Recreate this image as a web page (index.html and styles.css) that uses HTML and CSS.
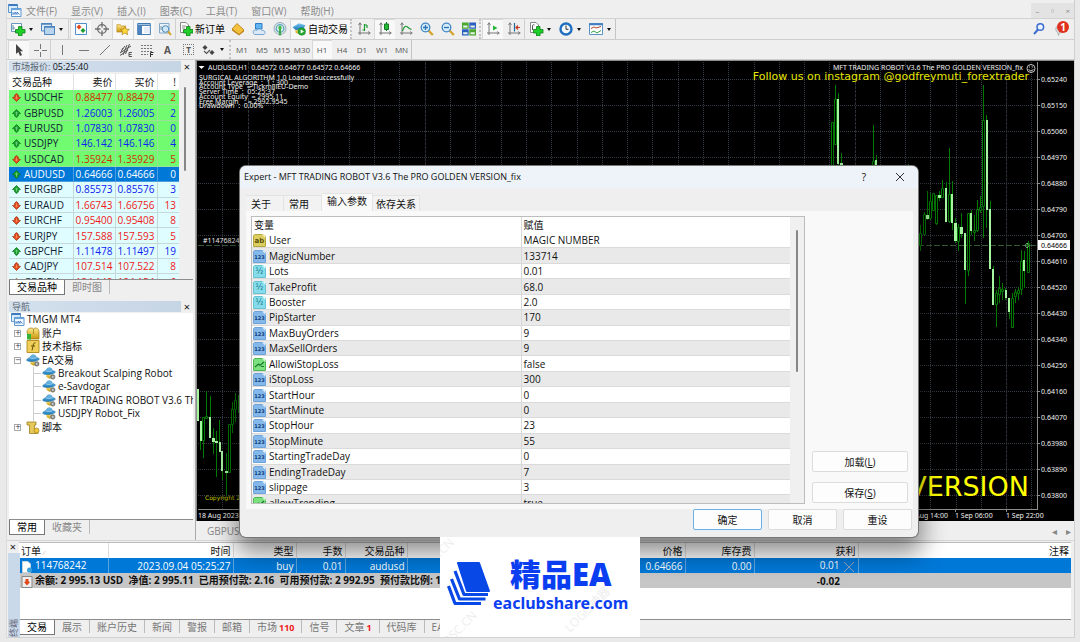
FILE: index.html
```html
<!DOCTYPE html>
<html lang="zh-CN">
<head>
<meta charset="utf-8">
<title>TMGM MT4</title>
<link rel="stylesheet" href="styles.css">
</head>
<body>
<svg class="defs" aria-hidden="true">
  <defs>
    <linearGradient id="gold" x1="0" y1="0" x2="0" y2="1"><stop offset="0" stop-color="#ffe98a"/><stop offset="1" stop-color="#c8960c"/></linearGradient>
    <linearGradient id="sky" x1="0" y1="0" x2="0" y2="1"><stop offset="0" stop-color="#7cc6f2"/><stop offset="1" stop-color="#1b78b8"/></linearGradient>
    <symbol id="up" viewBox="0 0 9 9"><path d="M4.5 .5L8.5 4.5L6.3 5V7L4.5 8.5L2.7 7V5L.5 4.5Z" fill="#19a02c" stroke="#0b6e1c" stroke-width=".7"/><path d="M4.5 2.5L6 4.3H5V6.5H4V4.3H3Z" fill="#6fd07c"/></symbol>
    <symbol id="down" viewBox="0 0 9 9"><path d="M4.5 8.5L8.5 4.5L6.3 4V2L4.5 .5L2.7 2V4L.5 4.5Z" fill="#e2481c" stroke="#9c3312" stroke-width=".7"/><path d="M4.5 6.5L6 4.7H5V2.5H4V4.7H3Z" fill="#f88a5c"/></symbol>
    <symbol id="int" viewBox="0 0 13 13"><path d="M1.5 .5H9L12.5 2V12.5H.5V1.5Z" fill="#84b8ea" stroke="#6da3d8"/><path d="M9 .5L12.5 4V.5Z" fill="#d9ebfb"/><text x="6.5" y="9.4" class="glyph" fill="#123c78">123</text></symbol>
    <symbol id="dbl" viewBox="0 0 13 13"><path d="M1.5 .5H9L12.5 2V12.5H.5V1.5Z" fill="#85dcea" stroke="#66c2d2"/><path d="M9 .5L12.5 4V.5Z" fill="#dcf8fb"/><text x="6.3" y="9" class="glyph half" fill="#137486">½</text></symbol>
    <symbol id="str" viewBox="0 0 13 13"><path d="M1.5 .5H9L12.5 2V12.5H.5V1.5Z" fill="#dccf62" stroke="#b5a63c"/><path d="M9 .5L12.5 4V.5Z" fill="#f7f2c2"/><text x="6.3" y="9" class="glyph ab" fill="#5c4f08">ab</text></symbol>
    <symbol id="bool" viewBox="0 0 13 13"><path d="M1.5 .5H9L12.5 2V12.5H.5V1.5Z" fill="#7de07f" stroke="#4fb656"/><path d="M9 .5L12.5 4V.5Z" fill="#d8f8d8"/><path d="M2 9L5.5 6L7 7.500L11 4M8 8.500H11" fill="none" stroke="#14792a" stroke-width="1.200"/></symbol>
    <symbol id="robot" viewBox="0 0 14 13"><path d="M4 6L4.5 10L8 12L10.5 8Z" fill="url(#gold)"/><path d="M.5 6.3C1 4.5 3 4 4 3.5C4.5 1 7 .3 8.500 1C10 1.500 10.300 3 10.500 3.500C12.500 3.700 13.500 4.500 13.200 5.500C11 7.500 3 8.500 .5 6.3Z" fill="url(#sky)" stroke="#2377a8" stroke-width=".5"/><path d="M4 3.800C6 4.800 8.500 4.500 10.500 3.500" fill="none" stroke="#c2e7fb" stroke-width=".7"/><circle cx="10.800" cy="9.900" r="2.300" fill="#8d8d88" stroke="#666" stroke-width=".5"/><circle cx="10.800" cy="9.900" r=".8" fill="#ddd"/></symbol>
    <symbol id="app" viewBox="0 0 14 13"><path d="M.5 .5H9.500V8.500H.5Z" fill="#d8ebfa" stroke="#5f97cf"/><path d="M.5 1H9.500" stroke="#3e7ac0" stroke-width="2"/><path d="M3.500 4.500H13V12.500H3.500Z" fill="#f5faff" stroke="#5f97cf"/><path d="M3.500 5.300H13" stroke="#6aa4dc" stroke-width="1.600"/><path d="M5 11V8.500L7 10.500V8L9 10.500V8L11.500 10.500" fill="none" stroke="#3a78c4" stroke-width=".9"/></symbol>
    <symbol id="plus" viewBox="0 0 10 10"><path d="M3.300 .5H6.700V3.300H9.500V6.700H6.700V9.500H3.300V6.700H.5V3.300H3.300Z" fill="#1fcf2a" stroke="#0b7d17"/></symbol>
    <symbol id="axes" viewBox="0 0 14 14"><path d="M3 1V13M1 11H13" stroke="#777" fill="none"/><path d="M1.500 3L3 .7L4.500 3M11 9.500L13.300 11L11 12.500" fill="none" stroke="#777" stroke-width=".9"/></symbol>
  </defs>
</svg>

<div class="app">
  <nav class="menubar">
    <svg class="i13"><use href="#app"/></svg>
    <button>文件(F)</button><button>显示(V)</button><button>插入(I)</button><button>图表(C)</button><button>工具(T)</button><button>窗口(W)</button><button>帮助(H)</button>
    <div class="winctl"><button aria-label="最小化">–</button><button aria-label="还原">▫</button><button aria-label="关闭">×</button></div>
  </nav>

  <div class="toolbar">
    <button class="tb drop" aria-label="新图表"><svg viewBox="0 0 16 14"><path d="M1.500 1.500H11.500V9.500H1.500Z" fill="#fff" stroke="#6b97bd"/><path d="M3 3V8M3 6H5" stroke="#5b8aa8" fill="none"/><path d="M8.500 4.500H12V7.500H15V11H12V14H8.500V11H5.500V7.500H8.500Z" fill="#1fcf2a" stroke="#0b7d17" stroke-width=".8"/></svg><i></i></button>
    <button class="tb drop" aria-label="配置"><svg viewBox="0 0 16 14"><path d="M1.500 1.500H11.500V9H1.500Z" fill="#dcebf8" stroke="#4c84bd"/><path d="M4.500 4.500H14.500V12.500H4.500Z" fill="#b9d5ee" stroke="#4c84bd"/><path d="M1 2H12M4 5H15" stroke="#4c84bd" stroke-width="1.500"/></svg><i></i></button>
    <span class="sep"></span>
    <button class="tb on" aria-label="市场报价"><svg viewBox="0 0 14 14"><path d="M1.500 1.500H12.500V12.500H1.500Z" fill="#fff" stroke="#4f8fcc"/><path d="M5 2.500L7.500 5L5 7.500L2.500 5Z" fill="#e2481c"/><path d="M9 6L11.500 8.500L9 11L6.500 8.500Z" fill="#19a02c"/></svg></button>
    <button class="tb" aria-label="数据窗口"><svg viewBox="0 0 14 14" fill="none" stroke="#6d6d6d"><circle cx="7" cy="7" r="4.300" stroke-width="1.300"/><path d="M7 0V5.500M7 8.500V14M0 7H5.500M8.500 7H14" stroke-width="1.300"/></svg></button>
    <button class="tb on" aria-label="导航"><svg viewBox="0 0 16 14"><path d="M1 2H5L6 3.500H11V10.500H1Z" fill="url(#gold)" stroke="#b68b1c" stroke-width=".7"/><path d="M10 4L11.600 7.200L15.200 7.500L12.500 9.900L13.300 13.500L10 11.600L6.800 13.500L7.600 9.900L4.900 7.500L8.500 7.200Z" fill="#ffd83a" stroke="#ad7e12" stroke-width=".8"/></svg></button>
    <button class="tb on" aria-label="终端"><svg viewBox="0 0 14 14"><path d="M.7 1.500H13.300V12.500H.7Z" fill="#fff" stroke="#3f7ab5"/><path d="M1 2.500H13V4H5V12H1Z" fill="#4a83bd"/><path d="M7 6H12M7 8H12M7 10H12" stroke="#cadcf2"/></svg></button>
    <button class="tb" aria-label="策略测试"><svg viewBox="0 0 14 14"><path d="M1.500 1.500H11V11H1.500Z" fill="#e9f3fb" stroke="#83a8c8"/><path d="M3 8V4M5 9V5" stroke="#79a"/><circle cx="7.500" cy="7" r="3.300" fill="#cfe8f8" stroke="#5388b5"/><path d="M10 9.500L13 12.800" stroke="#d7a32a" stroke-width="2"/></svg></button>
    <span class="sep"></span>
    <button class="tb neworder"><svg viewBox="0 0 14 14"><path d="M1.500 .5H7L9.500 3V10.500H1.500Z" fill="#fff" stroke="#888"/><path d="M3 4H7M3 6H6" stroke="#888"/><path d="M7.500 4.500H11V7.500H14V11H11V14H7.500V11H4.500V7.500H7.500Z" fill="#1fcf2a" stroke="#0b7d17" stroke-width=".8"/></svg>新订单</button>
    <button class="tb" aria-label="MetaEditor"><svg viewBox="0 0 14 14"><path d="M1 7L6 1.500L13 8L8 12.500Z" fill="#f5c13c" stroke="#ae7b12" stroke-width=".8"/><path d="M1 7L8 12.500L13 8V9.500L8 13.500L1 8.500Z" fill="#bd8112"/></svg></button>
    <button class="tb" aria-label="MQL5"><svg viewBox="0 0 14 14"><path d="M3.500 1.500H10V7H3.500Z" fill="#62b5f0" stroke="#2b7fc6"/><path d="M1.500 11.500C0 8 3.500 7.500 4.500 8.500C6 6.500 9.500 6.500 10 8.500C13 8 14 11 12 12.500H2.500Z" fill="#dbe9f6" stroke="#5b93c6" stroke-width=".8"/></svg></button>
    <button class="tb" aria-label="信号"><svg viewBox="0 0 14 14" fill="none"><circle cx="7" cy="6.500" r="6" fill="#d9e6e6" stroke="#9ab"/><circle cx="7" cy="6.500" r="3.800" stroke="#56a7c0" stroke-width="1.200"/><path d="M7 6V13.500" stroke="#2ba52f" stroke-width="1.700"/><circle cx="7" cy="5.500" r="1.700" fill="#42bd45"/></svg></button>
    <button class="tb auto on"><svg viewBox="0 0 15 14"><path d="M3 6L4 11L9 13L12 7Z" fill="url(#gold)"/><path d="M.5 5L7.500 .8L14.300 3L12 7.500L4 8.200Z" fill="url(#sky)"/><circle cx="10.500" cy="9.700" r="4" fill="#25a832" stroke="#0c7a1a" stroke-width=".5"/><path d="M9.300 7.500L12.800 9.700L9.300 11.900Z" fill="#fff"/></svg>自动交易</button>
    <span class="sep wide"></span>
    <button class="tb" aria-label="柱状图"><svg viewBox="0 0 14 14"><use href="#axes"/><path d="M7.500 2V9M7.500 3H10M5.500 8H7.500M10 3V6" stroke="#1d9a30" fill="none" stroke-width="1.200"/></svg></button>
    <button class="tb on" aria-label="蜡烛图"><svg viewBox="0 0 14 14"><use href="#axes"/><path d="M8.500 0V9" stroke="#117a22"/><path d="M6.500 2H10.500V7.500H6.500Z" fill="#24bb36" stroke="#117a22"/></svg></button>
    <button class="tb" aria-label="折线图"><svg viewBox="0 0 14 14"><use href="#axes"/><path d="M3.500 9C5 4 7 3.500 8.500 5S11 7 12.500 7.500" stroke="#1d9a30" fill="none" stroke-width="1.200"/></svg></button>
    <button class="tb" aria-label="放大"><svg viewBox="0 0 14 14"><path d="M8.500 8.500L12.800 13" stroke="#d4a52c" stroke-width="2.400"/><circle cx="5.500" cy="5.500" r="4.300" fill="#d4ecfb" stroke="#3f86c4" stroke-width="1.300"/><path d="M3 5.500H8M5.500 3V8" stroke="#2b72b4" stroke-width="1.300"/></svg></button>
    <button class="tb" aria-label="缩小"><svg viewBox="0 0 14 14"><path d="M8.500 8.500L12.800 13" stroke="#d4a52c" stroke-width="2.400"/><circle cx="5.500" cy="5.500" r="4.300" fill="#d4ecfb" stroke="#3f86c4" stroke-width="1.300"/><path d="M3 5.500H8" stroke="#2b72b4" stroke-width="1.300"/></svg></button>
    <button class="tb" aria-label="平铺窗口"><svg viewBox="0 0 14 14"><path d="M0 .5H6.700V6.700H0ZM7.300 7.300H14V13.500H7.300Z" fill="#48a72c"/><path d="M7.300 .5H14V6.700H7.300ZM0 7.300H6.700V13.500H0Z" fill="#2a5fc0"/><path d="M1.200 3.500H5.500V5.500H1.200ZM8.500 3.500H12.800V5.500H8.500ZM1.200 10.300H5.500V12.300H1.200ZM8.500 10.300H12.800V12.300H8.500Z" fill="#e9f5ea"/></svg></button>
    <span class="sep wide"></span>
    <button class="tb on" aria-label="自动滚动"><svg viewBox="0 0 14 14"><use href="#axes"/><path d="M7 3.500L11.500 6L7 8.500Z" fill="#26b336"/></svg></button>
    <button class="tb" aria-label="图表平移"><svg viewBox="0 0 14 14"><use href="#axes"/><path d="M7.500 1V9.500" stroke="#1c6aa0" stroke-width="1.200"/><path d="M13 5.500H9M11 3.500L9 5.500L11 7.500" fill="none" stroke="#c23b20" stroke-width="1.200"/></svg></button>
    <span class="sep"></span>
    <button class="tb drop" aria-label="技术指标"><svg viewBox="0 0 16 14"><path d="M2.500 .5H8L10.500 3V10.500H2.500Z" fill="#fff" stroke="#888"/><path d="M4.500 8V4C4.500 2.500 6 2.500 6.500 3" stroke="#555" fill="none"/><path d="M8.500 4.500H12V7.500H15V11H12V14H8.500V11H5.500V7.500H8.500Z" fill="#1fcf2a" stroke="#0b7d17" stroke-width=".8"/></svg><i></i></button>
    <button class="tb drop" aria-label="周期"><svg viewBox="0 0 16 14"><circle cx="8" cy="7" r="5.500" fill="#f2f8fd" stroke="#1f6fc0" stroke-width="2.400"/><path d="M8 3.500V7.300H10.500" stroke="#333" fill="none"/></svg><i></i></button>
    <button class="tb drop last" aria-label="模板"><svg viewBox="0 0 16 14"><path d="M1.500 1.500H14.500V12.500H1.500Z" fill="#fff" stroke="#5a93c8"/><path d="M1 2.300H15" stroke="#4480c0" stroke-width="2"/><path d="M3 6.500L6 5L8 6L13 4.500" stroke="#b5472c" fill="none"/><path d="M3 10.500L6 9L9 11L13 8.500" stroke="#35a040" fill="none"/></svg><i></i></button>
    <div class="right">
      <button class="tb" aria-label="搜索"><svg viewBox="0 0 14 14" fill="none" stroke="#3a6cd0"><circle cx="8.300" cy="5" r="3.300" fill="#eaf2ff" stroke-width="1.500"/><path d="M6 7.500L2 12" stroke-width="2"/></svg></button>
      <button class="tb chat" aria-label="消息"><svg viewBox="0 0 14 14"><path d="M1 6C1 3 8 2.500 9 6.500C9.500 10 6 11 4.500 10.700L3.500 13.500L2.500 10.300C1 9.500 .5 8 1 6Z" fill="#dcdcdc" stroke="#a5a5a5" stroke-width=".8"/></svg><b>1</b></button>
    </div>
  </div>

  <div class="toolbar second">
    <button class="tb on" aria-label="光标"><svg viewBox="0 0 14 14"><path d="M4 1V11L6.300 9L8 13L10 12L8.200 8.200H11Z" fill="#444"/></svg></button>
    <button class="tb" aria-label="十字准线"><svg viewBox="0 0 14 14" stroke="#777"><path d="M7.500 1V6M7.500 9V14M1 7.500H6M9 7.500H14"/></svg></button>
    <span class="sep"></span>
    <button class="tb" aria-label="垂直线"><svg viewBox="0 0 14 14" stroke="#777"><path d="M6.500 2V12"/></svg></button>
    <button class="tb" aria-label="水平线"><svg viewBox="0 0 14 14" stroke="#777"><path d="M2 7.500H12"/></svg></button>
    <button class="tb" aria-label="趋势线"><svg viewBox="0 0 14 14" stroke="#777"><path d="M2 12L12 2"/></svg></button>
    <button class="tb" aria-label="等距通道"><svg viewBox="0 0 14 14" stroke="#555" fill="none"><path d="M1 10L12 3M1 12.500L9 7M3 7L6 3M4 12L8 2M6.500 11L10.500 1M2 9L4 5M10 9.500V13.500H13M10 9.500H13M10 11.500H12.500"/></svg></button>
    <button class="tb" aria-label="斐波那契"><svg viewBox="0 0 14 14" stroke="#777" fill="none"><path d="M1 2.500H13M1 5.500H13M1 8.500H13M1 11.500H8" stroke-dasharray="2 1"/><path d="M10.500 14V9.500H13.500M10.500 11.500H13" stroke="#333"/></svg></button>
    <button class="tb a" aria-label="文字">A</button>
    <button class="tb t" aria-label="标签"><span>T</span></button>
    <button class="tb drop" aria-label="箭头"><svg viewBox="0 0 16 14"><path d="M4 2L6.500 4.500L4 7L1.500 4.500Z" fill="#444"/><path d="M3 8L5.500 10.500L9 7" stroke="#555" fill="none" stroke-width="1.200"/><path d="M11 7L13.500 9.500L11 12L8.500 9.500Z" fill="#444"/></svg><i></i></button>
    <span class="sep wide"></span>
    <button class="tb">M1</button><button class="tb">M5</button><button class="tb">M15</button><button class="tb">M30</button><button class="tb on">H1</button><button class="tb">H4</button><button class="tb">D1</button><button class="tb">W1</button><button class="tb last">MN</button>
  </div>

  <div class="workspace">
    <aside class="side">
      <header class="ptitle"><h2><span>市场报价:</span> 05:25:40</h2><button aria-label="关闭">×</button></header>
      <div class="market">
        <table>
          <thead><tr><th>交易品种</th><th>卖价</th><th>买价</th><th>!</th></tr></thead>
          <tbody>
            <tr class="g r"><td><svg><use href="#down"/></svg>USDCHF</td><td>0.88477</td><td>0.88479</td><td>2</td></tr>
            <tr class="g"><td><svg><use href="#up"/></svg>GBPUSD</td><td>1.26003</td><td>1.26005</td><td>2</td></tr>
            <tr class="g"><td><svg><use href="#up"/></svg>EURUSD</td><td>1.07830</td><td>1.07830</td><td>0</td></tr>
            <tr class="g"><td><svg><use href="#up"/></svg>USDJPY</td><td>146.142</td><td>146.146</td><td>4</td></tr>
            <tr class="g r"><td><svg><use href="#down"/></svg>USDCAD</td><td>1.35924</td><td>1.35929</td><td>5</td></tr>
            <tr class="sel"><td><svg><use href="#up"/></svg>AUDUSD</td><td>0.64666</td><td>0.64666</td><td>0</td></tr>
            <tr><td><svg><use href="#up"/></svg>EURGBP</td><td>0.85573</td><td>0.85576</td><td>3</td></tr>
            <tr class="r"><td><svg><use href="#down"/></svg>EURAUD</td><td>1.66743</td><td>1.66756</td><td>13</td></tr>
            <tr class="r"><td><svg><use href="#down"/></svg>EURCHF</td><td>0.95400</td><td>0.95408</td><td>8</td></tr>
            <tr class="r"><td><svg><use href="#down"/></svg>EURJPY</td><td>157.588</td><td>157.593</td><td>5</td></tr>
            <tr><td><svg><use href="#up"/></svg>GBPCHF</td><td>1.11478</td><td>1.11497</td><td>19</td></tr>
            <tr class="r"><td><svg><use href="#down"/></svg>CADJPY</td><td>107.514</td><td>107.522</td><td>8</td></tr>
            <tr class="r"><td><svg><use href="#down"/></svg>GBPJPY</td><td>184.148</td><td>184.154</td><td>6</td></tr>
          </tbody>
        </table>
        <div class="track"><div class="thumb"></div></div>
      </div>
      <div class="ptabs"><button class="active">交易品种</button><button>即时图</button></div>

      <header class="ptitle nav"><h2><span>导航</span></h2><button aria-label="关闭">×</button></header>
      <ul class="tree">
        <li><svg class="i13"><use href="#app"/></svg>TMGM MT4</li>
        <li class="l1"><i class="box">+</i><svg class="i13" viewBox="0 0 14 13"><path d="M1 5C1 1 6 0 7.500 2C9 0 13 1 13 5V12H3Z" fill="url(#gold)" stroke="#9a7712" stroke-width=".7"/><path d="M7.500 2V7" stroke="#9a7712" stroke-width=".7"/><path d="M1 7H5V12.500H1Z" fill="#36b33a"/></svg>账户</li>
        <li class="l1"><i class="box">+</i><svg class="i13" viewBox="0 0 14 13"><path d="M1 .5H13V12.500H1Z" fill="#efcf58" stroke="#b5922a"/><path d="M6 10.500L7.500 4C8 2.700 9 2.500 9.500 3M5 6H9" fill="none" stroke="#6a520e"/></svg>技术指标</li>
        <li class="l1"><i class="box">−</i><svg class="i13"><use href="#robot"/></svg>EA交易</li>
        <li class="l2"><svg class="i13"><use href="#robot"/></svg>Breakout Scalping Robot</li>
        <li class="l2"><svg class="i13"><use href="#robot"/></svg>e-Savdogar</li>
        <li class="l2"><svg class="i13"><use href="#robot"/></svg>MFT TRADING ROBOT V3.6 The PRO</li>
        <li class="l2"><svg class="i13"><use href="#robot"/></svg>USDJPY Robot_Fix</li>
        <li class="l1"><i class="box">+</i><svg class="i13" viewBox="0 0 14 13"><path d="M1 1H10V4H8.500V10H12V12.500H3.500V4H1Z" fill="#e5c85a" stroke="#9d7f22" stroke-width=".8"/><circle cx="10.500" cy="9.500" r="2.500" fill="#edc63d" stroke="#a5811a" stroke-width=".7"/></svg>脚本</li>
      </ul>
      <div class="ptabs"><button class="active">常用</button><button>收藏夹</button></div>
    </aside>

    <main class="chartpane">
      <div class="chart">
        <svg viewBox="196 60 878 461" preserveAspectRatio="xMinYMin slice" role="img" aria-label="AUDUSD H1">
          <path class="grid" d="M222.500 62V509M273.500 62V509M298.500 62V509M324.500 62V509M349.500 62V509M374.500 62V509M399.500 62V509M450.500 62V509M475.500 62V509M501.500 62V509M526.500 62V509M551.500 62V509M577.500 62V509M602.500 62V509M627.500 62V509M652.500 62V509M678.500 62V509M703.500 62V509M728.500 62V509M754.500 62V509M779.500 62V509M804.500 62V509M829.500 62V509M880.500 62V509M905.500 62V509M930.500 62V509M956.500 62V509M981.500 62V509M1031.500 62V509"/>
          <path class="grid day" d="M248.500 62V509M425.500 62V509M855.500 62V509M1006.500 62V509"/>
          <path class="grid" d="M198 79.500H1037M198 105.500H1037M198 131.500H1037M198 157.500H1037M198 183.500H1037M198 209.500H1037M198 235.500H1037M198 261.500H1037M198 287.500H1037M198 313.500H1037M198 339.500H1037M198 365.500H1037M198 391.500H1037M198 417.500H1037M198 443.500H1037M198 469.500H1037M198 495.500H1037"/>
          <path class="bid" d="M198 245.500H1037"/>
          <path class="wick" d="M835.500 85V145M838.500 93V166M841.500 153V166M873.500 125V166M876.500 155V166M908.500 164V166M920.500 225V251M924.500 212V235M927.500 191V220M930.500 193V220M933.500 193V211M936.500 195V225M939.500 191V201M942.500 180V198M946.500 182V222M949.500 148V223M952.500 181V230M955.500 218V243M958.500 224V251M961.500 213V238M965.500 233V304M968.500 213V276M971.500 210V235M974.500 215V241M977.500 200V232M980.500 196V213M983.500 85V238M986.500 115V228M990.500 201V269M993.500 266V305M996.500 290V327M999.500 276V303M1002.500 283V300M1005.500 288V300M1009.500 298V319M1012.500 293V327M1015.500 289V303M1018.500 287V300M1021.500 250V295M1024.500 251V288M1028.500 241V273M198.500 389V421M200.500 421V450M203.500 418V458M206.500 391V418M210.500 396V438M213.500 428V454M216.500 431V477M219.500 420V452M222.500 451V480M226.500 453V495M229.500 424V472M232.500 402V433M235.500 393V422M238.500 395V413"/>
          <path class="hollow" d="M831.500 122.500h2V166h-2ZM834.500 99.500h2v45h-2ZM872.500 161.500h2V166h-2ZM919.500 233.500h2v12h-2ZM923.500 214.500h2v20h-2ZM929.500 201.500h2v17h-2ZM932.500 193.500h2v17h-2ZM935.500 195.500h2v28h-2ZM941.500 188.500h2v9h-2ZM948.500 194.500h2v27h-2ZM957.500 227.500h2v14h-2ZM967.500 213.500h2v57h-2ZM973.500 230.500h2v2h-2ZM976.500 209.500h2v21h-2ZM979.500 207.500h2v3h-2ZM982.500 120.500h2v86h-2ZM995.500 293.500h2v11h-2ZM998.500 288.500h2v6h-2ZM1001.500 289.500h2v2h-2ZM1011.500 298.500h2v29h-2ZM1014.500 292.500h2v4h-2ZM1017.500 290.500h2v3h-2ZM1020.500 261.500h2v28h-2ZM1027.500 243.500h2v29h-2ZM202.500 417.500h2v23h-2ZM205.500 416.500h2v2h-2ZM228.500 424.500h2v48h-2ZM231.500 409.500h2v15h-2ZM234.500 400.500h2v9h-2Z"/>
          <path class="full" d="M837 99h2v65h-2ZM840 163h3v3h-3ZM875 160h2v6h-2ZM926 215h3v4h-3ZM938 195h3v3h-3ZM945 188h2v34h-2ZM951 194h2v29h-2ZM954 223h3v18h-3ZM960 227h3v7h-3ZM964 233h2v37h-2ZM970 213h2v18h-2ZM986 120h2v90h-2ZM989 209h2v60h-2ZM992 269h2v36h-2ZM1005 290h2v8h-2ZM1008 298h2v14h-2ZM1023 260h2v11h-2ZM197 389h2v32h-2ZM200 421h2v20h-2ZM209 417h2v21h-2ZM212 438h3v4h-3ZM215 441h3v2h-3ZM219 442h2v10h-2ZM221 451h2v20h-2ZM225 471h3v2h-3Z"/>
          <path class="axis" d="M196 60.500H1074M196.500 60V522M1037.500 62V509.500M198 509.500H1038M1037 79.500h3M1037 105.500h3M1037 131.500h3M1037 157.500h3M1037 183.500h3M1037 209.500h3M1037 235.500h3M1037 261.500h3M1037 287.500h3M1037 313.500h3M1037 339.500h3M1037 365.500h3M1037 391.500h3M1037 417.500h3M1037 443.500h3M1037 469.500h3M1037 495.500h3M955.500 509v3M1006.500 509v3"/>
          <path d="M198.500 66H204.500L201.500 69Z" fill="#fff"/>
          <g class="ct">
            <text x="208" y="70">AUDUSD,H1&#160; 0.64572 0.64677 0.64572 0.64666</text>
            <text x="199" y="80">SURGICAL ALGORITHM 1.0 Loaded Successfully</text>
            <text x="199" y="85">Account Leverage&#160; :&#160; 1 : 300</text>
            <text x="199" y="89">Account Type&#160; = TickmillEU-Demo</text>
            <text x="199" y="94">Server Time&#160; :&#160; 05:25:37</text>
            <text x="199" y="99">Account Equity&#160; = 2995.11</text>
            <text x="199" y="104">Free Margin&#160; &#160; &#160;= 2992.9545</text>
            <text x="199" y="108">Drawdown&#160; :&#160; 0.00%</text>
            <text x="1023" y="70" text-anchor="end">MFT TRADING ROBOT V3.6 The PRO GOLDEN VERSION_fix</text>
            <text x="203" y="243">#114768242 buy</text>
            <text x="198" y="518">18 Aug 2023</text>
            <text x="948" y="518" text-anchor="end">31 Aug 14:00</text>
            <text x="955" y="518">1 Sep 06:00</text>
            <text x="1006" y="518">1 Sep 22:00</text>
            <text x="1041" y="82">0.65240</text><text x="1041" y="108">0.65150</text><text x="1041" y="134">0.65060</text><text x="1041" y="160">0.64970</text><text x="1041" y="186">0.64880</text><text x="1041" y="212">0.64790</text><text x="1041" y="238">0.64700</text><text x="1041" y="264">0.64610</text><text x="1041" y="290">0.64520</text><text x="1041" y="316">0.64430</text><text x="1041" y="342">0.64340</text><text x="1041" y="368">0.64250</text><text x="1041" y="394">0.64160</text><text x="1041" y="420">0.64070</text><text x="1041" y="446">0.63980</text><text x="1041" y="472">0.63890</text><text x="1041" y="498">0.63800</text>
          </g>
          <path d="M1038 240H1070V250H1038Z" fill="#fff"/>
          <text class="now" x="1041" y="248">0.64666</text>
          <path d="M1027 243L1029 245.500L1027 248L1025 245.500Z" fill="none" stroke="#8fd08f" stroke-width=".8"/>
          <g fill="none" stroke="#ddd" stroke-width=".9"><circle cx="1031" cy="68.500" r="4"/><path d="M1028.500 69.500Q1031 72.500 1033.500 69.500M1029.500 66.500V67.500M1032.500 66.500V67.500"/></g>
          <text class="follow" x="1029" y="80" text-anchor="end">Follow us on instagram @godfreymuti_forextrader</text>
          <text class="copy" x="205" y="500">Copyright 2023</text>
          <text class="big" x="1029" y="496" text-anchor="end">VERSION</text>
        </svg>
      </div>
      <div class="charttabs"><button>GBPUSD,H1</button><div class="arrows"><button aria-label="左">◂</button><button aria-label="右">▸</button></div></div>
    </main>
  </div>

  <section class="terminal">
    <div class="tside"><button aria-label="关闭">×</button><h2>终端</h2></div>
    <div class="tmain">
      <div class="tscroll">
        <table>
          <colgroup><col class="c1"><col class="c2"><col class="c3"><col class="c4"><col class="c5"><col class="c6"><col class="c7"><col class="c8"><col class="c9"></colgroup>
          <thead><tr><th>订单 <small>⁄</small></th><th>时间</th><th>类型</th><th>手数</th><th>交易品种</th><th>价格</th><th>库存费</th><th>获利</th><th>注释</th></tr></thead>
          <tbody>
            <tr class="sel"><td><svg viewBox="0 0 12 12"><path d="M1.500 .5H7L9.500 3V11.500H1.500Z" fill="#fff" stroke="#c8d4de"/><circle cx="8.500" cy="9" r="2.500" fill="#3ba0dc"/></svg>114768242</td><td>2023.09.04 05:25:27</td><td>buy</td><td>0.01</td><td>audusd</td><td>0.64666</td><td>0.00</td><td>0.01<button class="close" aria-label="平仓"><svg viewBox="0 0 12 12"><path d="M1 1L11 11M11 1L1 11" stroke="#8fa3b5"/></svg></button></td><td></td></tr>
            <tr class="sum"><td colspan="7"><svg viewBox="0 0 12 12"><path d="M1 .5H11V11.500H1Z" fill="#eee" stroke="#888"/><path d="M6 9.500L9 6L7.500 5.500V3H4.500V5.500L3 6Z" fill="#e2481c"/></svg>余额: 2 995.13 USD&#160; 净值: 2 995.11&#160; 已用预付款: 2.16&#160; 可用预付款: 2 992.95&#160; 预付款比例: 138</td><td>-0.02</td><td></td></tr>
          </tbody>
        </table>
      </div>
      <div class="ttabs"><button class="active">交易</button><button>展示</button><button>账户历史</button><button>新闻</button><button>警报</button><button>邮箱</button><button>市场<b>110</b></button><button>信号</button><button>文章<b>1</b></button><button>代码库</button><button>EA</button></div>
    </div>
  </section>
</div>

<section class="dialog" role="dialog" aria-label="Expert">
  <header><h1>Expert - MFT TRADING ROBOT V3.6 The PRO GOLDEN VERSION_fix</h1><button aria-label="帮助">?</button><button aria-label="关闭"><svg viewBox="0 0 10 10"><path d="M1 1L9 9M9 1L1 9" stroke="#333"/></svg></button></header>
  <div class="dtabs"><button>关于</button><button>常用</button><button class="active">输入参数</button><button>依存关系</button></div>
  <div class="panel">
    <div class="params">
      <div class="clip">
      <table>
        <thead><tr><th>变量</th><th>赋值</th></tr></thead>
        <tbody>
          <tr><td><svg><use href="#str"/></svg>User</td><td>MAGIC NUMBER</td></tr>
          <tr><td><svg><use href="#int"/></svg>MagicNumber</td><td>133714</td></tr>
          <tr><td><svg><use href="#dbl"/></svg>Lots</td><td>0.01</td></tr>
          <tr><td><svg><use href="#dbl"/></svg>TakeProfit</td><td>68.0</td></tr>
          <tr><td><svg><use href="#dbl"/></svg>Booster</td><td>2.0</td></tr>
          <tr><td><svg><use href="#int"/></svg>PipStarter</td><td>170</td></tr>
          <tr><td><svg><use href="#int"/></svg>MaxBuyOrders</td><td>9</td></tr>
          <tr><td><svg><use href="#int"/></svg>MaxSellOrders</td><td>9</td></tr>
          <tr><td><svg><use href="#bool"/></svg>AllowiStopLoss</td><td>false</td></tr>
          <tr><td><svg><use href="#int"/></svg>iStopLoss</td><td>300</td></tr>
          <tr><td><svg><use href="#int"/></svg>StartHour</td><td>0</td></tr>
          <tr><td><svg><use href="#int"/></svg>StartMinute</td><td>0</td></tr>
          <tr><td><svg><use href="#int"/></svg>StopHour</td><td>23</td></tr>
          <tr><td><svg><use href="#int"/></svg>StopMinute</td><td>55</td></tr>
          <tr><td><svg><use href="#int"/></svg>StartingTradeDay</td><td>0</td></tr>
          <tr><td><svg><use href="#int"/></svg>EndingTradeDay</td><td>7</td></tr>
          <tr><td><svg><use href="#int"/></svg>slippage</td><td>3</td></tr>
          <tr><td><svg><use href="#bool"/></svg>allowTrending</td><td>true</td></tr>
        </tbody>
      </table>
      </div>
      <div class="track"><div class="thumb"></div></div>
    </div>
    <div class="sidebtns"><button class="btn">加载(<u>L</u>)</button><button class="btn">保存(<u>S</u>)</button></div>
  </div>
  <footer><button class="btn primary">确定</button><button class="btn">取消</button><button class="btn">重设</button></footer>
</section>

<div class="brand">
  <span class="wm w1">LOGOSC.CN</span><span class="wm w2">LOGOSC.CN</span><span class="wm w3">LOGO神器</span>
  <svg viewBox="0 0 44 44"><path d="M12 1H33L43 29H21Z" fill="#0748e6" stroke="#0748e6" stroke-width="2" stroke-linejoin="round"/><path d="M9 9L18 32.500H42M5.500 17L13.500 37H39.500M2.500 24L9 41.500H35" fill="none" stroke="#0748e6" stroke-width="3.200" stroke-linejoin="round"/></svg>
  <div><strong>精品EA</strong><span>eaclubshare.com</span></div>
</div>
</body>
</html>
```
FILE: styles.css
```css
* { box-sizing: border-box; }
body {
  margin: 0;
  min-height: 100vh;
  display: flex;
  position: relative;
  overflow: hidden;
  background: #e9e9e9;
  font: 10px/14px "Open Sans", "Noto Sans", "Noto Sans CJK SC", sans-serif;
  color: #111;
}
button { font: inherit; color: inherit; border: 0; padding: 0; background: none; white-space: nowrap; }
h1, h2 { margin: 0; font: inherit; }
table { border-collapse: collapse; border-spacing: 0; table-layout: fixed; }
th { font-weight: 400; }
th, td { padding: 0; white-space: nowrap; }
.defs { position: absolute; width: 0; height: 0; }
.i13 { width: 14px; height: 13px; flex: none; }
.glyph { font: bold 5px "DejaVu Sans", sans-serif; text-anchor: middle; }
.glyph.ab { font-size: 7px; }
.glyph.half { font: 8px "DejaVu Sans", sans-serif; }

.app {
  flex: 1;
  min-width: 0;
  margin: 0 5px 4px 6px;
  display: flex;
  flex-direction: column;
  background: #efefef;
  border-right: 1px solid #cfcfcf;
  border-left: 1px solid #dcdcdc;
  border-bottom: 1px solid #d2d2d2;
}

.menubar { display: flex; align-items: center; gap: 14px; height: 19px; padding: 3px 0 0 1px; border-bottom: 1px solid #d2d2d2; color: #8b8b8b; }
.menubar .i13 { margin-right: -10px; }
.winctl { margin-left: auto; display: flex; gap: 9px; padding: 0 4px; background: #e3e3e3; font-size: 8px; align-self: stretch; align-items: center; }

.toolbar { display: flex; align-items: stretch; height: 21px; padding-left: 1px; border-bottom: 1px solid #cecece; }
.toolbar.second { height: 20px; }
.tb { width: 21px; display: flex; align-items: center; justify-content: center; flex: none; }
.tb svg { width: 14px; height: 14px; flex: none; }
.tb.on { background: #f8f8f8; box-shadow: inset 1px 1px 0 #d8d8d8; }
.tb.drop { width: 30px; justify-content: flex-start; padding-left: 2px; gap: 3px; }
.tb.drop svg { width: 16px; }
.tb.drop i { border: 2px solid transparent; border-top: 3px solid #111; border-bottom: 0; }
.tb.neworder, .tb.auto { width: 50px; gap: 2px; font-size: 10px; color: #000; }
.tb.auto { width: 60px; }
.tb.last { border-right: 1px solid #c4c4c4; }
.sep { width: 2px; border-left: 1px solid #cfcfcf; flex: none; }
.sep.wide { width: 3px; border-left: 2px dotted #c4c4c4; }
.right { margin-left: auto; display: flex; }
.chat { position: relative; width: 25px; }
.chat b { position: absolute; left: 8px; top: 2px; width: 12px; height: 12px; border-radius: 6px; background: #e0301e; color: #fff; font-size: 10px; line-height: 12px; }
.second .tb { font-size: 8px; color: #555; }
.second .sep.wide ~ .tb { width: 20px; }
.second .tb.a { font-weight: 700; font-size: 10px; }
.t span { border: 1px dotted #777; width: 11px; height: 11px; line-height: 9px; font-weight: 700; }

.workspace { flex: 1; display: flex; min-height: 0; }
.side { width: 189px; flex: none; display: flex; flex-direction: column; padding: 1px 2px 4px; border-right: 1px solid #aaa; }
.ptitle { display: flex; height: 13px; align-items: flex-start; line-height: 11px; flex: none; }
.ptitle h2 { flex: 1; background: linear-gradient(90deg, #d3e0ee, #c6d5e4); padding-left: 3px; font-size: 9px; line-height: 11px; }
.ptitle h2 span { color: #5d6670; }
.ptitle button { width: 12px; font-size: 11px; line-height: 11px; }
.market { display: flex; height: 206px; flex: none; overflow: hidden; border-bottom: 1px solid #8d8d8d; }
.market table { width: 170px; height: 216px; background: #fff; }
.market th { height: 16px; border-right: 1px solid #e2e2e2; text-align: right; padding-right: 2px; line-height: 14px; }
.market th:first-child { text-align: left; padding-left: 3px; width: 64px; }
.market th:nth-child(2), .market th:nth-child(3) { width: 42px; }
.market td { background: #dffdff; color: #1020f0; text-align: right; padding-right: 2px; line-height: 14px; border-right: 1px solid #c6d8da; border-bottom: 1px solid #c6d8da; }
.market td:first-child { text-align: left; padding-left: 3px; color: #123; }
.market td:last-child, .market th:last-child { border-right: 0; padding-right: 3px; }
.market td svg { width: 9px; height: 9px; margin-right: 3px; vertical-align: -1px; }
.market .r td:not(:first-child) { color: #f01818; }
.market .g td { background: #70fb70; border-color: #9ae09a; }
.market .g.r td:not(:first-child) { color: #d03000; }
.market .sel td, .market .sel td:first-child { background: #0078d7; color: #fff; border-color: #4a9ee0; }
.track { flex: 1; display: flex; justify-content: center; }
.thumb { width: 2px; background: #868686; border-radius: 1px; }
.market .thumb { height: 84px; margin-top: 13px; margin-right: 2px; }
.ptabs { display: flex; height: 16px; flex: none; }
.ptabs button { padding: 0 7px; line-height: 14px; color: #888; border-right: 1px solid #bbb; align-self: flex-start; }
.ptabs .active { height: 15px; background: #fff; color: #000; border: 1px solid #777; border-top: 0; }
.nav { margin-top: 5px; height: 12px; }
.tree { margin: 0; padding: 0 0 85px; list-style: none; flex: 1; background: #fff; overflow: hidden; border-bottom: 1px solid #8d8d8d; display: grid; grid-template-rows: repeat(9, minmax(0, 1fr)); }
.tree li { display: flex; align-items: center; gap: 2px; white-space: nowrap; padding-left: 2px; line-height: 13px; }
.tree .l1 { padding-left: 5px; }
.tree .l2 { padding-left: 33px; gap: 2px; background: linear-gradient(#ccc, #ccc) 24px 50% / 8px 1px no-repeat, linear-gradient(#ccc, #ccc) 24px 0 / 1px 100% no-repeat; }
.box { width: 7px; height: 7px; border: 1px solid #aaa; font: 7px/5px "DejaVu Sans", sans-serif; color: #334; text-align: center; margin-right: 3px; }

.chartpane { flex: 1; min-width: 0; display: flex; flex-direction: column; }
.chart { flex: 1; min-height: 0; background: #000; overflow: hidden; }
.chart svg { display: block; width: 100%; height: 100%; }
.grid { stroke: #333b44; fill: none; stroke-dasharray: 1 1; }
.grid.day { stroke-dasharray: 3 1; stroke: #2c3238; }
.bid { stroke: #315a35; stroke-dasharray: 6 2; }
.wick, .hollow { stroke: #007a00; fill: none; }
.hollow { fill: #000; }
.full { fill: #a6f5a0; }
.axis { stroke: #8c8c8c; fill: none; }
.ct text, .now { font: 7px "Noto Sans", sans-serif; fill: #f0f0f0; }
.now { fill: #000; }
.follow { font: 11px "DejaVu Sans", sans-serif; fill: #e6e600; }
.copy { font: 6px "DejaVu Sans", sans-serif; fill: #c8c800; }
.big { font: 27px "DejaVu Sans", sans-serif; fill: #ffff00; }
.charttabs { height: 19px; display: flex; align-items: center; justify-content: space-between; padding: 0 3px 0 11px; color: #888; }
.arrows { display: flex; gap: 9px; }

.terminal { display: flex; height: 97px; border-top: 1px solid #d5d5d5; }
.tside { width: 12px; display: flex; flex-direction: column; align-items: center; }
.tside button { height: 12px; line-height: 10px; font-size: 11px; }
.tside h2 { flex: 1; width: 100%; margin-left: 1px; background: #c9d9ea; color: #667; writing-mode: vertical-rl; text-orientation: sideways; transform: rotate(180deg); font-size: 9px; line-height: 11px; }
.tmain { flex: 1; min-width: 0; padding: 1px 3px 0 0; display: flex; flex-direction: column; }
.tscroll { flex: 1; background: #fff; border-top: 1px solid #bbb; border-bottom: 1px solid #8d8d8d; }
.tmain table { width: 100%; }
.c1 { width: 89px; } .c2 { width: 125px; } .c3 { width: 63px; } .c4 { width: 49px; } .c5 { width: 62px; } .c6 { width: 278px; } .c7 { width: 69px; } .c8 { width: 104px; }
.tmain th, .tmain td { height: 15px; line-height: 14px; text-align: right; padding-right: 2px; border-right: 1px solid #ddd; }
.tmain th:first-child, .tmain td:first-child { text-align: left; padding-left: 2px; }
.tmain th small { font-size: 6px; line-height: 6px; color: #aaa; }
.tmain td svg { width: 12px; height: 12px; margin-right: 2px; vertical-align: middle; }
.tmain .sel td { background: #0078d7; color: #fff; border-color: #5aa6e0; }
.tmain .sel td:nth-child(8) { padding-right: 1px; }
.close { width: 14px; height: 12px; line-height: 12px; margin-left: 3px; vertical-align: middle; }
.tmain .close svg { display: block; margin: 0; }
.tmain .sum td { background: #c6c6c6; font-weight: 700; border: 0; }
.tmain .sum td:nth-child(2) { padding-right: 18px; }
.tmain th:last-child, .tmain td:last-child { border-right: 0; }
.ttabs { display: flex; height: 17px; color: #777; }
.ttabs button { padding: 0 7px; height: 13px; line-height: 15px; border-right: 1px solid #bbb; }
.ttabs .active { height: 15px; background: #fff; color: #000; border: 1px solid #777; border-top: 0; }
.ttabs b { color: #f01818; margin-left: 2px; font-size: 9px; }
.ttabs button:last-child { border: 0; }

.dialog {
  position: absolute;
  left: 240px;
  right: 162px;
  top: 166px;
  padding: 0 5px 7px;
  border-radius: 6px;
  background: #efefef;
  box-shadow: 0 0 0 1px #777, 0 12px 24px 4px rgba(0, 0, 0, .45);
}
.dialog header { height: 22px; margin: 0 -5px; padding: 0 4px; border-radius: 6px 6px 0 0; background: #edf3f8; display: flex; align-items: center; }
.dialog h1 { flex: 1; font-size: 9px; }
.dialog header button { width: 36px; display: grid; place-items: center; font-size: 10px; }
.dialog header button:last-child { margin-right: -4px; }
.dialog header svg { width: 10px; height: 10px; }
.dtabs { display: flex; align-items: flex-end; height: 23px; padding-left: 1px; }
.dtabs button { height: 16px; padding: 0 12px 0 5px; border: 1px solid #e4e4e4; border-bottom: 0; border-left: 0; background: #f2f2f2; }
.dtabs .active { height: 18px; padding: 0 5px 3px; background: #f9f9f9; }
.dtabs button:last-child { padding: 0 3px; }
.panel { display: flex; gap: 7px; padding: 5px; margin-left: 1px; background: #f9f9f9; }
.params { flex: 1; display: flex; height: 288px; border: 1px solid #bdbdbd; background: #fff; }
.clip { flex: 1; overflow: hidden; }
.params table { width: 100%; height: 294px; }
.params th, .params td { text-align: left; padding-left: 2px; line-height: 14px; }
.params th { height: 16px; }
.params th:first-child { width: 50%; }
.params td:first-child { padding-left: 1px; }
.params th:first-child, .params td:first-child { border-right: 1px solid #d8d8d8; }
.params tbody tr:nth-child(even) td { background: #e9e9e9; border-top: 1px solid #dadada; border-bottom: 1px solid #dadada; }
.params td svg { width: 13px; height: 13px; margin-right: 3px; vertical-align: -3px; }
.params .track { flex: none; width: 14px; background: #f0f0f0; }
.params .thumb { height: 142px; margin-top: 13px; }
.sidebtns { width: 96px; display: flex; flex-direction: column; justify-content: flex-end; gap: 10px; padding-bottom: 1px; }
.btn { height: 21px; background: #fdfdfd; border: 1px solid #dcdcdc; border-radius: 2px; }
.dialog footer { display: flex; justify-content: flex-end; gap: 6px; padding-right: 1px; }
.dialog footer .btn { width: 69px; }
.dialog footer .primary { border-color: #6ab0e6; }

.brand { position: absolute; left: 440px; top: 537px; width: 200px; height: 100px; background: #fff; overflow: hidden; display: flex; align-items: center; padding: 0 0 6px 6px; gap: 3px; color: #0a3ef0; }
.brand svg { width: 44px; height: 44px; position: relative; }
.brand div { display: flex; flex-direction: column; align-items: center; font-family: "Noto Sans", "Noto Sans CJK SC", sans-serif; font-weight: 700; position: relative; }
.brand strong { font-size: 31px; line-height: 38px; }
.brand div span { font-size: 16px; line-height: 20px; }
.wm { position: absolute; color: #eee; font-size: 12px; white-space: nowrap; transform: rotate(-45deg); transform-origin: 0 100%; }
.w1 { left: -31px; top: 42px; }
.w2 { left: -8px; top: 115px; }
.w3 { left: 132px; top: 84px; }
```
